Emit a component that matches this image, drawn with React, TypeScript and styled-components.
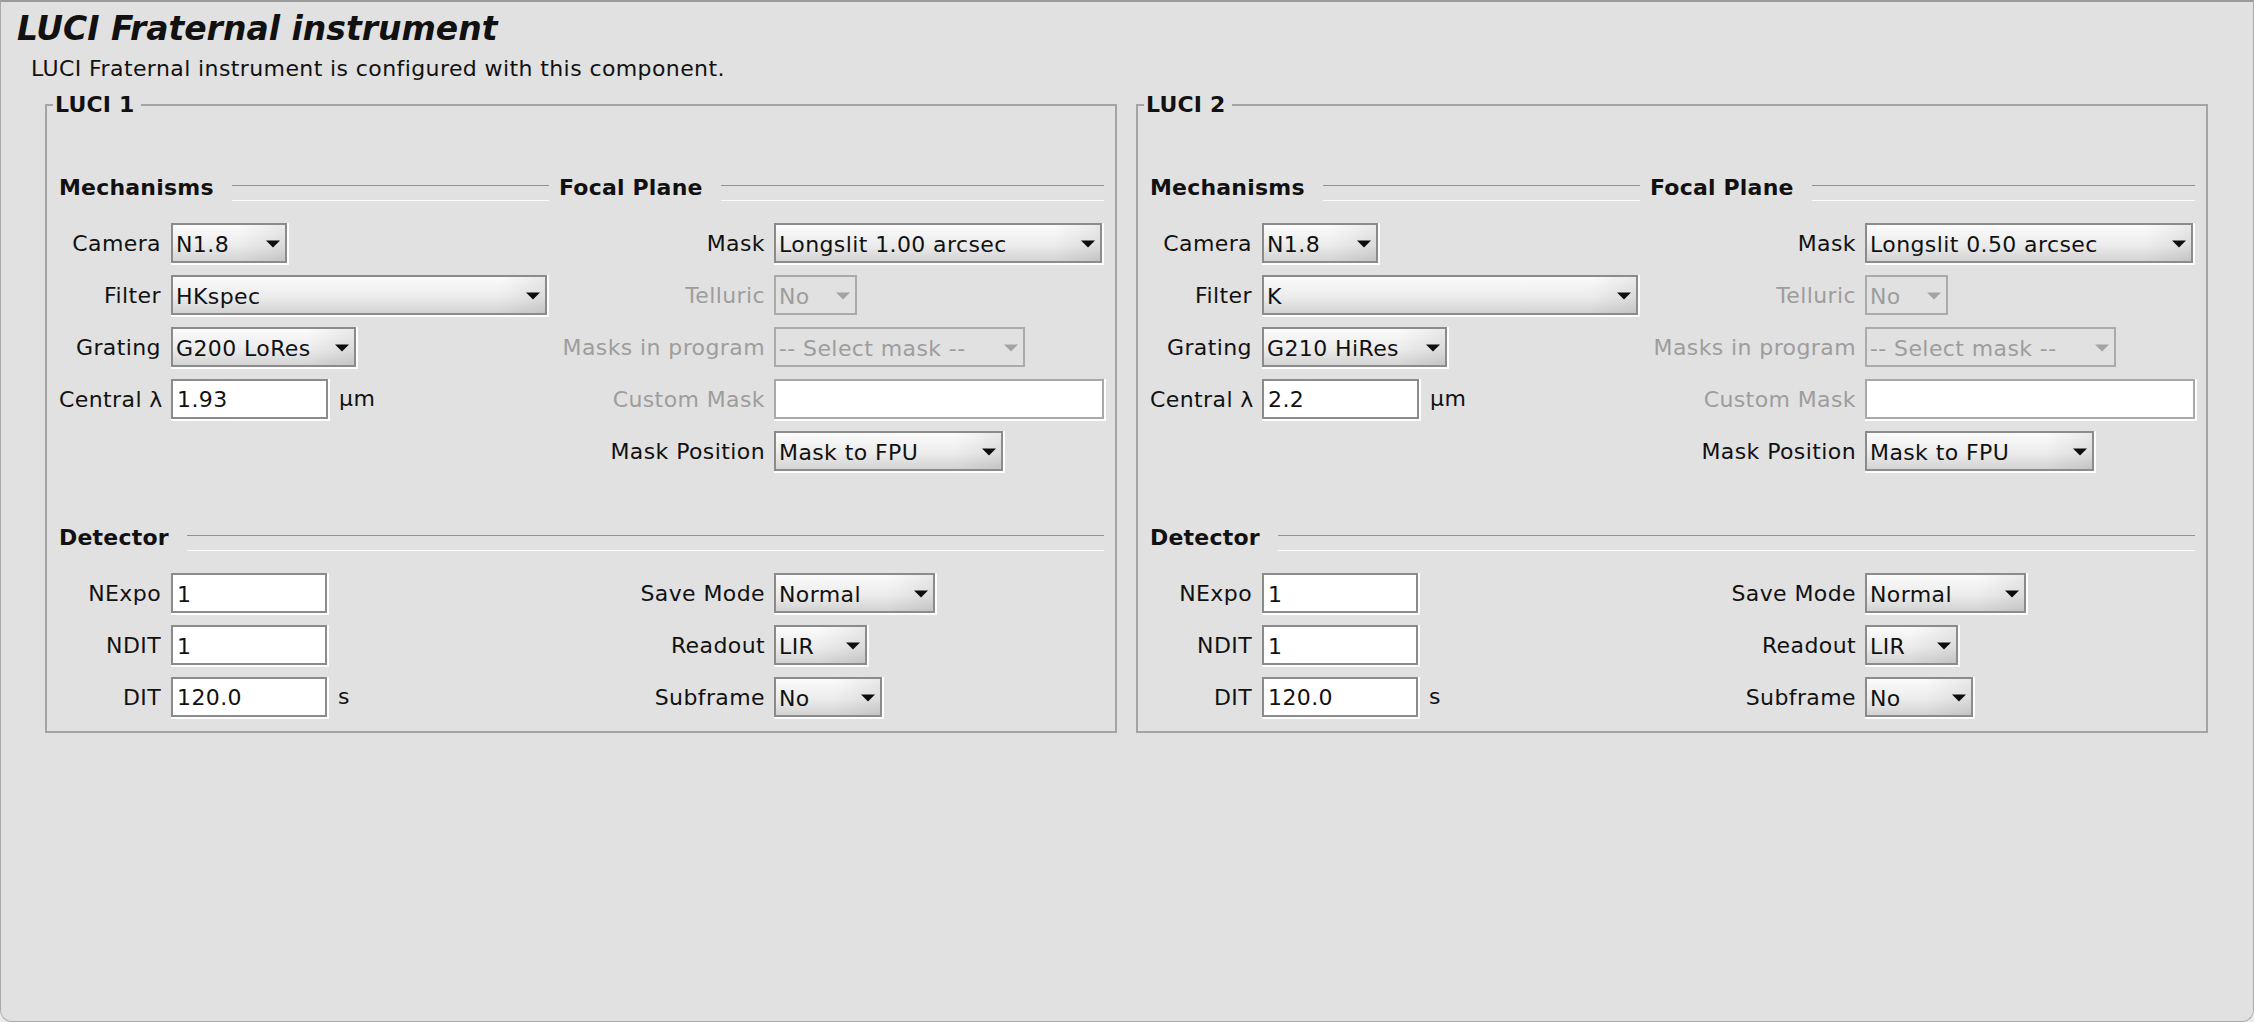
import React from "react";
import styled, { createGlobalStyle } from "styled-components";

const GlobalStyle = createGlobalStyle`
  html, body {
    margin: 0;
    padding: 0;
    background: #ebebeb;
  }
  body {
    font-family: "DejaVu Sans", "Liberation Sans", sans-serif;
  }
`;

const Window = styled.div`
  box-sizing: border-box;
  width: 2254px;
  height: 1022px;
  overflow: hidden;
  background: #e1e1e1;
  border-top: 2px solid #9b9b9b;
  border-left: 1px solid #a9a9a9;
  border-right: 1px solid #a9a9a9;
  border-bottom: 1px solid #a9a9a9;
  border-bottom-left-radius: 12px;
  border-bottom-right-radius: 12px;
  color: #111;
  font-size: 22px;
  letter-spacing: 0.4px;
`;

const Title = styled.h1`
  margin: 8px 0 0;
  padding-left: 16px;
  font-size: 33px;
  line-height: 38px;
  font-weight: bold;
  font-style: italic;
  letter-spacing: 0;
`;

const Subtitle = styled.p`
  margin: 8px 0 0;
  padding-left: 30px;
  line-height: 26px;
`;

const Boxes = styled.div`
  display: flex;
  gap: 19px;
  margin-top: 10px;
  padding: 0 45px 0 44px;
`;

const Box = styled.fieldset`
  flex: 1;
  min-width: 0;
  margin: 0;
  padding: 57px 11px 14px 12px;
  border: 2px solid #a4a4a4;
`;

const Legend = styled.legend`
  margin-left: -6px;
  padding: 0 6px 0 2px;
  font-weight: bold;
  line-height: 26px;
  letter-spacing: 0.2px;
`;

const Columns = styled.div<{ $top?: number }>`
  display: grid;
  grid-template-columns: 490px 1fr;
  column-gap: 10px;
  align-items: start;
  margin-top: ${(p) => p.$top ?? 0}px;
`;

const Header = styled.div`
  display: flex;
  gap: 18px;
  margin-bottom: 22px;
  font-weight: bold;
  line-height: 26px;
  letter-spacing: 0.2px;
`;

const Rule = styled.div`
  flex: 1;
  margin-top: 10px;
  border-top: 1px solid #929292;
  border-bottom: 1px solid #fbfbfb;
`;

const Form = styled.div<{ $labelWidth: number; $gap: number }>`
  display: grid;
  grid-template-columns: ${(p) => p.$labelWidth}px auto;
  justify-content: start;
  grid-auto-rows: 40px;
  row-gap: 12px;
  column-gap: ${(p) => p.$gap}px;
  align-items: center;
`;

const Label = styled.span<{ $disabled?: boolean }>`
  text-align: right;
  white-space: nowrap;
  line-height: 26px;
  padding-top: 2px;
  color: ${(p) => (p.$disabled ? "#9d9d9d" : "#111")};
`;

const Cell = styled.div`
  display: flex;
  align-items: center;
  gap: 11px;
  line-height: 26px;
`;

const ComboBox = styled.div<{ $width: number; $disabled?: boolean }>`
  box-sizing: border-box;
  width: ${(p) => p.$width}px;
  height: 40px;
  display: flex;
  align-items: center;
  justify-content: space-between;
  padding: 2px 5px 0 3px;
  border: 2px solid ${(p) => (p.$disabled ? "#ababab" : "#8b8b8b")};
  background: ${(p) =>
    p.$disabled
      ? "transparent"
      : "linear-gradient(to right, rgba(0,0,0,0) calc(100% - 46px), rgba(0,0,0,0.07)), linear-gradient(to bottom, #fbfbfb, #ececec 55%, #d3d3d3)"};
  box-shadow: ${(p) => (p.$disabled ? "none" : "1px 1px 0 1px #fdfdfd")};
  color: ${(p) => (p.$disabled ? "#9d9d9d" : "#111")};
  white-space: nowrap;
  overflow: hidden;
`;

const TextField = styled.div<{ $width: number; $disabled?: boolean }>`
  box-sizing: border-box;
  width: ${(p) => p.$width}px;
  height: 40px;
  display: flex;
  align-items: center;
  padding: 2px 4px 0;
  background: #fff;
  border: 2px solid ${(p) => (p.$disabled ? "#a9a9a9" : "#8b8b8b")};
  box-shadow: 1px 1px 0 1px #fdfdfd;
  white-space: nowrap;
`;

const Arrow = ({ disabled }: { disabled?: boolean }) => (
  <svg width="14" height="8" viewBox="0 0 14 8" style={{ flex: "none" }}>
    <polygon points="0,0.5 14,0.5 7,7.5" fill={disabled ? "#a3a3a3" : "#0d0d0d"} />
  </svg>
);

const Combo = ({ value, width, disabled }: { value: string; width: number; disabled?: boolean }) => (
  <ComboBox $width={width} $disabled={disabled}>
    <span>{value}</span>
    <Arrow disabled={disabled} />
  </ComboBox>
);

const Section = ({ title, children }: { title: string; children: React.ReactNode }) => (
  <div>
    <Header>
      <span>{title}</span>
      <Rule />
    </Header>
    {children}
  </div>
);

type Luci = {
  name: string;
  filter: string;
  grating: string;
  central: string;
  mask: string;
};

const instruments: Luci[] = [
  { name: "LUCI 1", filter: "HKspec", grating: "G200 LoRes", central: "1.93", mask: "Longslit 1.00 arcsec" },
  { name: "LUCI 2", filter: "K", grating: "G210 HiRes", central: "2.2", mask: "Longslit 0.50 arcsec" },
];

const LuciPanel = ({ luci }: { luci: Luci }) => (
  <Box>
    <Legend>{luci.name}</Legend>
    <Columns>
      <Section title="Mechanisms">
        <Form $labelWidth={102} $gap={10}>
          <Label>Camera</Label>
          <Combo value="N1.8" width={116} />
          <Label>Filter</Label>
          <Combo value={luci.filter} width={376} />
          <Label>Grating</Label>
          <Combo value={luci.grating} width={185} />
          <Label>Central λ</Label>
          <Cell>
            <TextField $width={157}>{luci.central}</TextField>
            <span>µm</span>
          </Cell>
        </Form>
      </Section>
      <Section title="Focal Plane">
        <Form $labelWidth={206} $gap={9}>
          <Label>Mask</Label>
          <Combo value={luci.mask} width={328} />
          <Label $disabled>Telluric</Label>
          <Combo value="No" width={83} disabled />
          <Label $disabled>Masks in program</Label>
          <Combo value="-- Select mask --" width={251} disabled />
          <Label $disabled>Custom Mask</Label>
          <TextField $width={330} $disabled />
          <Label>Mask Position</Label>
          <Combo value="Mask to FPU" width={229} />
        </Form>
      </Section>
    </Columns>
    <Columns $top={54}>
      <div style={{ gridColumn: "1 / -1" }}>
        <Header>
          <span>Detector</span>
          <Rule />
        </Header>
      </div>
      <Form $labelWidth={102} $gap={10}>
        <Label>NExpo</Label>
        <TextField $width={156}>1</TextField>
        <Label>NDIT</Label>
        <TextField $width={156}>1</TextField>
        <Label>DIT</Label>
        <Cell>
          <TextField $width={156}>120.0</TextField>
          <span>s</span>
        </Cell>
      </Form>
      <Form $labelWidth={206} $gap={9}>
        <Label>Save Mode</Label>
        <Combo value="Normal" width={161} />
        <Label>Readout</Label>
        <Combo value="LIR" width={93} />
        <Label>Subframe</Label>
        <Combo value="No" width={108} />
      </Form>
    </Columns>
  </Box>
);

export default function App() {
  return (
    <>
      <GlobalStyle />
      <Window>
        <Title>LUCI Fraternal instrument</Title>
        <Subtitle>LUCI Fraternal instrument is configured with this component.</Subtitle>
        <Boxes>
          {instruments.map((l) => (
            <LuciPanel key={l.name} luci={l} />
          ))}
        </Boxes>
      </Window>
    </>
  );
}
